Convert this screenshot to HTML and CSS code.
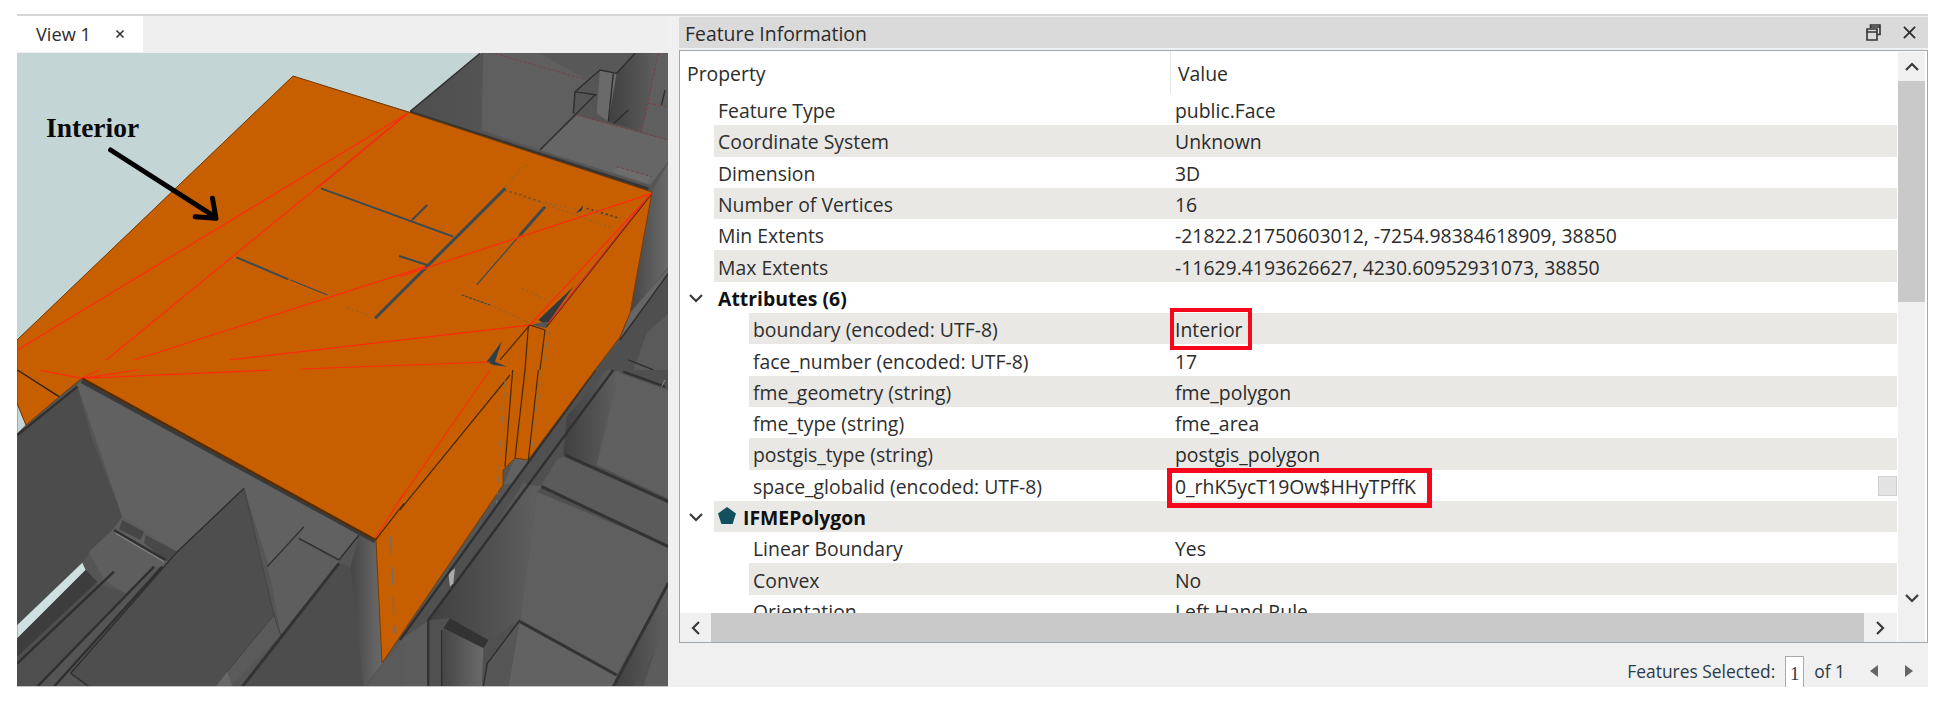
FILE: index.html
```html
<!DOCTYPE html>
<html lang="en">
<head>
<meta charset="utf-8">
<title>Feature Information</title>
<link rel="stylesheet" href="styles.css">
</head>
<body>
<div class="window">
  <section class="view">
    <div class="tabs"><div class="tab"><span>View 1</span><svg class="tab-x" viewBox="0 0 10 10"><path d="M1.5 1.5l7 7M8.5 1.5l-7 7"/></svg></div></div>
    <div class="canvas">
      <svg class="scene" viewBox="17 53 651 634" preserveAspectRatio="none">
        <defs>
          <linearGradient id="wallA" x1="0" y1="0" x2="1" y2="0"><stop offset="0" stop-color="#454545"/><stop offset=".6" stop-color="#5c5c5c"/><stop offset="1" stop-color="#6a6a6a"/></linearGradient>
          <linearGradient id="wallB" x1="0" y1="0" x2="1" y2="0"><stop offset="0" stop-color="#404040"/><stop offset=".5" stop-color="#4f4f4f"/><stop offset="1" stop-color="#606060"/></linearGradient>
          <linearGradient id="wallD" x1="0" y1="0" x2="1" y2="0"><stop offset="0" stop-color="#4e4e4e"/><stop offset="1" stop-color="#585858"/></linearGradient>
        </defs>
        <rect x="17" y="53" width="651" height="634" fill="#555"/>
        <polygon points="17,53 481,53 410,112 293,76 17,340" fill="#c3d5d5"/>

        <!-- upper right rooms -->
        <g transform="translate(400 50) scale(.3333)" class="z">
          <polygon points="30,185 240,10 245,240 420,300" fill="url(#wallD)"/>
          <polygon points="250,10 705,10 650,70 600,60 525,125 520,195 420,300 245,240" fill="#5f5f5f"/>
          <polygon points="420,10 705,10 650,70 600,60 560,90" fill="#585858"/>
          <polygon points="650,70 705,10 775,10 725,245 625,215" fill="url(#wallB)"/>
          <polygon points="600,60 650,70 625,215 590,190" fill="#6a6a6a"/>
          <polygon points="525,125 590,135 590,190 530,195" fill="#555"/>
          <polygon points="530,195 805,270 805,335 750,405 420,300" fill="#666"/>
          <polygon points="775,10 805,10 805,270 725,245" fill="#5f5f5f"/>
          <polygon points="640,365 655,350 755,380 740,400" fill="#6d6d6d"/>
          <polygon points="755,425 805,340 805,650 690,790" fill="url(#wallA)"/>
          <polygon points="690,790 805,655 805,670 660,870" fill="#666"/>
          <polygon points="660,870 805,670 805,960 585,960" fill="#4f4f4f"/>
          <polygon points="740,850 805,790 805,960 700,960" fill="#5a5a5a"/>
          <polyline points="285,10 560,90" class="rdash"/>
          <polyline points="775,10 725,245" class="rdash"/>
          <polyline points="530,195 805,270" class="rdash"/>
          <polyline points="745,160 805,170" class="rdash"/>
          <polyline points="420,300 585,135" class="dk"/>
          <polyline points="525,125 600,60 650,70 705,10" class="dk"/>
          <polyline points="525,125 520,190" class="dk"/>
          <polyline points="525,125 590,135" class="dk"/>
          <polyline points="640,222 685,180" class="dk"/>
          <polyline points="640,70 625,215" class="dk"/>
          <polyline points="795,120 785,165" class="dk"/>
          <polyline points="650,350 755,380" class="rdash"/>
          <polyline points="240,10 30,185" class="dk"/>
          <polyline points="30,188 745,418" class="band"/>
          <polyline points="660,870 805,670" class="dk"/>
          <polyline points="685,930 760,960" class="dk"/>
        </g>

        <!-- lower right rooms -->
        <g transform="translate(400 370) scale(.3333)" class="z">
          <polygon points="585,0 620,0 805,0 805,950 0,950 0,810" fill="#505050"/>
          <polygon points="660,10 805,60 805,385 590,285 640,30" fill="#5f5f5f"/>
          <polygon points="620,0 660,5 590,285 490,255 500,140" fill="url(#wallB)"/>
          <polygon points="490,260 805,400 805,525 425,345 470,270" fill="#5b5b5b"/>
          <polygon points="370,340 425,350 410,365 360,750 265,810 150,745 90,750" fill="url(#wallB)"/>
          <polygon points="410,365 805,530 805,640 650,915 360,750" fill="#5f5f5f"/>
          <polygon points="360,750 650,915 640,950 325,950" fill="#626262"/>
          <polygon points="360,750 325,950 250,950 262,880" fill="#565656"/>
          <polygon points="150,745 265,810 250,835 130,775" fill="#333"/>
          <polygon points="130,775 250,835 245,950 125,950" fill="url(#wallA)"/>
          <polygon points="0,810 90,750 90,950 0,950" fill="#5c5c5c"/>
          <polygon points="805,640 805,780 700,950 640,950" fill="url(#wallB)"/>
          <polygon points="805,720 805,950 730,950" fill="#5c5c5c"/>
          <polygon points="145,610 165,595 160,640 150,650" fill="#aaa"/>
          <polygon points="310,345 345,265 385,270 345,335" fill="#616161"/>
          <polyline points="585,0 0,810" class="dk3"/>
          <polyline points="640,0 85,750 85,950" class="dk3"/>
          <polyline points="125,780 125,950" class="dk"/>
          <polyline points="495,255 805,395" class="dk4"/>
          <polyline points="425,350 805,530" class="dk4"/>
          <polyline points="360,755 650,915" class="dk4"/>
          <polyline points="805,640 640,950" class="dk4"/>
          <polyline points="360,750 262,880 250,950" class="dk"/>
          <polyline points="670,5 795,50" class="dk3"/>
          <polyline points="795,30 785,50" class="lt"/>
        </g>

        <!-- lower left rooms -->
        <g transform="translate(14 370) scale(.3333)" class="z">
          <polygon points="10,105 35,165 10,190" fill="#c3d5d5"/>
          <polygon points="190,50 10,195 10,765 205,575 230,545 295,480 325,440 235,210" fill="#4c4c4c"/>
          <polygon points="190,45 205,30 1035,495 975,570 855,505 870,470 765,590 690,355 490,545 325,440" fill="#616161"/>
          <polygon points="295,480 325,440 490,545 445,590 335,670 270,630 225,545" fill="#5e5e5e"/>
          <polygon points="10,860 245,640 335,670 70,950 10,950" fill="#4f4f4f"/>
          <polygon points="205,578 215,600 10,805 10,765" fill="#cfe0e0"/>
          <polygon points="215,600 250,635 10,860 10,805" fill="#3d3d3d"/>
          <polygon points="335,670 420,590 445,590 120,950 70,950" fill="#555"/>
          <polygon points="690,355 780,735 640,905 605,950 230,950 170,910 445,590" fill="#4e4e4e"/>
          <polygon points="760,590 870,470 855,510 975,575 800,795 775,650" fill="#5e5e5e"/>
          <polygon points="975,580 1010,590 1050,950 685,950" fill="#4d4d4d"/>
          <polygon points="1010,590 1035,500 1085,515 1105,880 1050,950" fill="url(#wallA)"/>
          <polygon points="780,735 800,795 650,950 640,905" fill="#5a5a5a"/>
          <polygon points="640,905 655,950 605,950" fill="#686868"/>
          <polygon points="325,450 390,485 380,510 315,478" fill="#464646"/>
          <polygon points="395,495 490,545 460,575 390,520" fill="#484848"/>
          <polygon points="1105,880 1170,810 1170,950 1060,950" fill="#5a5a5a"/>
          <polyline points="300,480 455,570" class="dk3"/>
          <polyline points="305,490 450,575" class="lt"/>
          <polyline points="690,355 490,545 170,910" class="dk"/>
          <polyline points="10,880 300,605" class="dk3"/>
          <polyline points="70,950 420,590" class="dk3"/>
          <polyline points="120,950 445,590" class="dk3"/>
          <polyline points="170,910 225,950" class="dk"/>
          <polyline points="760,590 870,470" class="dk"/>
          <polyline points="855,505 975,570" class="dk"/>
          <polyline points="975,570 1035,495" class="dk"/>
          <polyline points="690,355 780,735 800,795" class="soft"/>
          <polyline points="975,580 685,950" class="dk4"/>
          <polyline points="780,735 640,905" class="soft"/>
          <polyline points="190,50 10,195" class="dk3"/>
          <polyline points="205,30 1085,510" class="shadow"/>
        </g>

        <polygon class="roof" points="293,76 408,112 652,192 630,313 620,337 595,370 528,460 515,458 503,470 503,485 382,663 376,540 82,378 59,397 26,425 17,403 17,340"/>

        <!-- marks on the roof, left part -->
        <g transform="scale(.4337 .3333)" class="z">
          <polyline points="740,565 1045,710" class="slate"/>
          <polyline points="985,615 950,660" class="slate"/>
          <polyline points="1165,565 865,955" class="slate3"/>
          <polyline points="545,772 665,838" class="slate"/>
          <polyline points="670,840 755,885" class="slate thin"/>
          <polyline points="920,768 985,795" class="slate"/>
          <polyline points="800,925 850,945" class="dots"/>
          <polyline points="735,560 940,340" class="pink"/>
          <polyline points="940,340 40,1050" class="red"/>
          <polyline points="940,340 245,1080" class="red"/>
          <polyline points="1225,975 530,1080" class="red"/>
          <polyline points="980,800 310,1080" class="red"/>
        </g>
        <!-- marks on the roof, right part -->
        <g transform="translate(400 50) scale(.3333)" class="z">
          <polyline points="360,360 310,415" class="dots"/>
          <polyline points="385,345 360,360" class="dots"/>
          <polyline points="435,470 360,555" class="slate3"/>
          <polyline points="360,555 230,705" class="slate thin"/>
          <polyline points="185,735 270,765" class="slate thin dash2"/>
          <polyline points="315,420 420,455" class="dots dark"/>
          <polyline points="315,420 640,535" class="dots"/>
          <polyline points="420,455 660,505" class="dots"/>
          <polyline points="560,475 660,505" class="dots dark"/>
          <polyline points="365,715 440,750" class="dots"/>
          <polyline points="270,765 390,820" class="dots"/>
          <polygon points="528,490 550,465 545,482" fill="#2f3f4a"/>
          <polygon points="415,810 520,710 440,825" fill="#33393d"/>
          <polygon points="410,820 445,815 440,835 395,825" fill="#555"/>
          <polygon points="260,935 305,875 285,935 320,950 280,945" fill="#2f3f4a"/>
          <polyline points="755,432 440,830" class="brown"/>
          <polyline points="390,825 300,930" class="brown"/>
          <polyline points="385,830 375,960" class="brown"/>
          <polyline points="435,840 420,960" class="brown"/>
          <polyline points="390,825 435,840" class="brown"/>
          <polyline points="445,840 430,960" class="gdash"/>
          <polyline points="755,430 0,680" class="red"/>
          <polyline points="755,430 390,825" class="red"/>
          <polyline points="745,440 445,820" class="pink"/>
        </g>
        <g transform="translate(400 370) scale(.3333)" class="z">
          <polyline points="330,15 0,420" class="brown"/>
          <polyline points="338,0 315,290" class="brown"/>
          <polyline points="375,0 345,265" class="brown"/>
          <polyline points="415,0 385,270" class="brown"/>
          <polyline points="315,30 290,400" class="gdash"/>
          <polyline points="425,0 395,240" class="gdash"/>
          <polyline points="270,0 0,390" class="red"/>
        </g>
        <g transform="translate(14 370) scale(.3333)" class="z">
          <polyline points="1130,500 1142,790" class="gdash wide"/>
          <polyline points="1170,370 1080,510" class="red"/>
          <polyline points="1170,400 1085,510" class="brown"/>
          <polyline points="10,0 135,80" class="black"/>
          <polyline points="75,0 205,25" class="red"/>
          <polyline points="205,25 370,0" class="red"/>
          <polyline points="205,25 255,0" class="red"/>
          <polyline points="205,25 770,0" class="red"/>
          <polyline points="861,-3 1428,-24" class="red"/>
          <polyline points="205,25 1085,510" class="edge"/>
        </g>
        <g transform="scale(.4337 .3333)" class="z">
          <polyline points="255,450 495,650" class="arrow"/>
          <polyline points="490,595 498,655 450,650" class="arrow"/>
        </g>
      </svg>
      <span class="scene-label">Interior</span>
    </div>
  </section>

  <section class="panel">
    <header class="panel-title">
      <span>Feature Information</span>
      <div class="panel-actions">
        <svg class="ic-restore" viewBox="0 0 15 17"><path d="M4.5 4V1h9.5v9.5h-3M1 5h10v11H1zM1 8h10M4.5 3h9.5"/></svg>
        <svg class="ic-close" viewBox="0 0 14 14"><path d="M1 1l12 12M13 1L1 13"/></svg>
      </div>
    </header>
    <div class="box">
      <div class="box-main">
        <div class="tree">
          <div class="head"><div class="head-p">Property</div><div class="head-v">Value</div></div>
          <div class="rows">
            <div class="row l1"><div class="k">Feature Type</div><div class="v">public.Face</div></div>
            <div class="row l1 alt"><div class="k">Coordinate System</div><div class="v">Unknown</div></div>
            <div class="row l1"><div class="k">Dimension</div><div class="v">3D</div></div>
            <div class="row l1 alt"><div class="k">Number of Vertices</div><div class="v">16</div></div>
            <div class="row l1"><div class="k">Min Extents</div><div class="v">-21822.21750603012, -7254.98384618909, 38850</div></div>
            <div class="row l1 alt"><div class="k">Max Extents</div><div class="v">-11629.4193626627, 4230.60952931073, 38850</div></div>
            <div class="row l1 group"><svg class="twisty" viewBox="0 0 14 9"><path d="M1 1l6 6 6-6"/></svg><div class="k"><b>Attributes (6)</b></div></div>
            <div class="row l2 alt"><div class="k">boundary (encoded: UTF-8)</div><div class="v">Interior<i class="mark mark-a"></i></div></div>
            <div class="row l2"><div class="k">face_number (encoded: UTF-8)</div><div class="v">17</div></div>
            <div class="row l2 alt"><div class="k">fme_geometry (string)</div><div class="v">fme_polygon</div></div>
            <div class="row l2"><div class="k">fme_type (string)</div><div class="v">fme_area</div></div>
            <div class="row l2 alt"><div class="k">postgis_type (string)</div><div class="v">postgis_polygon</div></div>
            <div class="row l2"><div class="k">space_globalid (encoded: UTF-8)</div><div class="v">0_rhK5ycT19Ow$HHyTPffK<i class="mark mark-b"></i><i class="more"></i></div></div>
            <div class="row l1 group alt"><svg class="twisty" viewBox="0 0 14 9"><path d="M1 1l6 6 6-6"/></svg><div class="k"><svg class="penta" viewBox="0 0 18 17"><path d="M9 0l9 6.4-3.4 10.6H3.4L0 6.4z"/></svg><b>IFMEPolygon</b></div></div>
            <div class="row l2"><div class="k">Linear Boundary</div><div class="v">Yes</div></div>
            <div class="row l2 alt"><div class="k">Convex</div><div class="v">No</div></div>
            <div class="row l2"><div class="k">Orientation</div><div class="v">Left Hand Rule</div></div>
          </div>
        </div>
        <div class="hbar">
          <div class="btn-h"><svg class="chev" viewBox="0 0 9 14"><path d="M8 1L2 7l6 6"/></svg></div>
          <div class="thumb-h"></div>
          <div class="btn-h"><svg class="chev" viewBox="0 0 9 14"><path d="M1 1l6 6-6 6"/></svg></div>
        </div>
      </div>
      <div class="vbar">
        <div class="btn-v up"><svg class="chev-v" viewBox="0 0 14 9"><path d="M1 8l6-6 6 6"/></svg></div>
        <div class="thumb-v"></div>
        <div class="track-v"></div>
        <div class="btn-v"><svg class="chev-v" viewBox="0 0 14 9"><path d="M1 1l6 6 6-6"/></svg></div>
      </div>
    </div>
    <footer class="status">
      <span>Features Selected:</span>
      <span class="page">1</span>
      <span>of 1</span>
      <svg class="pager first" viewBox="0 0 8 12"><path d="M8 0v12L0 6z"/></svg>
      <svg class="pager" viewBox="0 0 8 12"><path d="M0 0v12l8-6z"/></svg>
    </footer>
  </section>
</div>
</body>
</html>
```

FILE: styles.css
```css
* { box-sizing: border-box; }
html, body { margin: 0; padding: 0; background: #fff; }
body { font-family: "Open Sans", "Noto Sans", sans-serif; font-size: 19.4px; color: #2b2b2b; width: 1943px; height: 710px; overflow: hidden; }

.window { display: flex; margin: 14px 15px 0 17px; width: 1911px; height: 673px; border-top: 2px solid #d6d6d6; background: #f0f0f0; }

.view { width: 651px; flex: none; display: flex; flex-direction: column; }
.tabs { height: 37px; background: #efefef; display: flex; flex: none; }
.tab { width: 126px; height: 36px; background: #fff; display: flex; align-items: center; padding-left: 19px; gap: 24px; font-size: 18.2px; }
.tab-x { width: 10px; height: 10px; fill: none; stroke: #333; stroke-width: 1.6; }
.canvas { position: relative; flex: 1; overflow: hidden; border-bottom: 1px solid #c4c4c4; }
.scene { display: block; width: 651px; height: 634px; filter: blur(.55px); }
.scene-label { position: absolute; left: 29px; top: 57px; font: bold 27.5px/36px "Liberation Serif", serif; color: #0a0a0a; }

.roof { fill: #c75f00; stroke: #7a3c00; stroke-width: 1; }
.z polyline { fill: none; vector-effect: non-scaling-stroke; }
.z .red { stroke: #ff2a10; stroke-width: 1.2; }
.z .rdash { stroke: #7a3f3f; stroke-width: 1; stroke-dasharray: 3 2; }
.z .pink { stroke: #d92a3a; stroke-width: 1.3; }
.z .dk { stroke: #2e2e2e; stroke-width: 1.4; }
.z .dk3 { stroke: #303030; stroke-width: 2.4; }
.z .dk4 { stroke: #333; stroke-width: 3; }
.z .lt { stroke: #8a8a8a; stroke-width: 1; }
.z .soft { stroke: #444; stroke-width: 1; }
.z .band { stroke: #353535; stroke-width: 4; }
.z .shadow { stroke: #3a3a3a; stroke-width: 7; }
.z .slate { stroke: #3c4a52; stroke-width: 2; }
.z .slate.thin { stroke-width: 1.2; }
.z .slate3 { stroke: #3c4a52; stroke-width: 3; }
.z .dash2 { stroke-dasharray: 3 1; }
.z .dots { stroke: #8a6238; stroke-width: 1.2; stroke-dasharray: 2 3; }
.z .dots.dark { stroke: #5a3a20; stroke-width: 1.6; }
.z .brown { stroke: #4a2800; stroke-width: 1.2; }
.z .gdash { stroke: #7b7468; stroke-width: 1; stroke-dasharray: 7 5; }
.z .gdash.wide { stroke: #6f6f6f; stroke-width: 1.4; stroke-dasharray: 18 12; }
.z .black { stroke: #2a2210; stroke-width: 1.4; }
.z .edge { stroke: #5a2a00; stroke-width: 2; }
.z .arrow { stroke: #000; stroke-width: 5; stroke-linecap: round; stroke-linejoin: round; }

.panel { flex: 1; margin-left: 11px; display: flex; flex-direction: column; min-width: 0; }
.panel-title { height: 31px; margin-top: 1px; background: #dadada; display: flex; align-items: center; justify-content: space-between; padding: 2px 12px 0 6px; flex: none; }
.panel-actions { display: flex; align-items: center; gap: 22px; margin-top: -2px; }
.ic-restore { width: 15px; height: 17px; fill: none; stroke: #333; stroke-width: 1.6; }
.ic-close { width: 13px; height: 13px; fill: none; stroke: #2e2e2e; stroke-width: 2; }

.box { margin-top: 2px; height: 593px; flex: none; display: flex; border: 1px solid #9da8b0; background: #fff; padding-right: 2px; }
.box-main { flex: 1; min-width: 0; display: flex; flex-direction: column; }
.tree { flex: 1; min-height: 0; overflow: hidden; }
.head { height: 43px; display: flex; align-items: center; }
.head-p { width: 491px; padding: 2px 0 0 7px; height: 100%; display: flex; align-items: center; border-right: 1px solid #e6e6e6; }
.head-v { padding: 2px 0 0 7px; }
.rows { display: flex; flex-direction: column; }
.row { height: 31.3px; flex: none; display: flex; align-items: center; white-space: nowrap; padding-top: 2px; }
.row.l1 { margin-left: 34px; }
.row.l2 { margin-left: 69px; }
.row.alt { background: #e9e8e5; }
.k { padding-left: 4px; display: flex; align-items: center; gap: 7px; color: #2e2e2e; }
.l1 .k { width: 461px; }
.l2 .k { width: 426px; }
.v { flex: 1; position: relative; height: 100%; display: flex; align-items: center; }
.k b { font-weight: 700; color: #111; }
.twisty { width: 14px; height: 9px; margin-left: -25px; margin-right: 11px; flex: none; fill: none; stroke: #3a3a3a; stroke-width: 2.2; }
.penta { width: 18px; height: 17px; fill: #12505f; flex: none; margin-top: -4px; }
.group .k { width: auto; }
.mark { position: absolute; border: 4px solid #f5081c; }
.mark-a { left: -5px; top: -7px; width: 82px; height: 42px; }
.mark-b { left: -8px; top: -4px; width: 265px; height: 40px; border-width: 5px; }
.more { position: absolute; right: 0; top: 4px; width: 19px; height: 20px; background: #e3e3e3; border: 1px solid #cfcfcf; }

.hbar { height: 29px; flex: none; display: flex; background: #f0f0f0; }
.btn-h { width: 31px; flex: none; display: flex; align-items: center; justify-content: center; background: #f0f0f0; }
.btn-h:last-child { width: 33px; }
.thumb-h { flex: 1; background: #c9c9c9; }
.chev { width: 9px; height: 14px; fill: none; stroke: #3a3a3a; stroke-width: 2.2; }

.vbar { width: 27px; flex: none; background: #f0f0f0; display: flex; flex-direction: column; margin: 1px 0 0 1px; }
.btn-v { height: 30px; flex: none; display: flex; align-items: center; justify-content: center; }
.btn-v.up { height: 29px; }
.thumb-v { height: 221px; flex: none; background: #c9c9c9; }
.track-v { flex: 1; }
.btn-v:last-child { height: 60px; align-items: flex-start; padding-top: 12px; }
.chev-v { width: 14px; height: 9px; fill: none; stroke: #3a3a3a; stroke-width: 2.2; }

.status { flex: 1; display: flex; align-items: flex-end; justify-content: flex-end; color: #2b3a46; font-size: 17.4px; line-height: 31px; padding-right: 15px; }
.page { width: 19px; height: 31px; background: #fff; border: 1px solid #a9a9a9; border-bottom: 0; margin: 0 10px; text-align: center; font-family: "Liberation Serif", serif; font-size: 19px; line-height: 34px; }
.pager { width: 8px; height: 12px; fill: #666; margin: 0 0 10px 27px; }
.pager.first { margin-left: 25px; }
```
